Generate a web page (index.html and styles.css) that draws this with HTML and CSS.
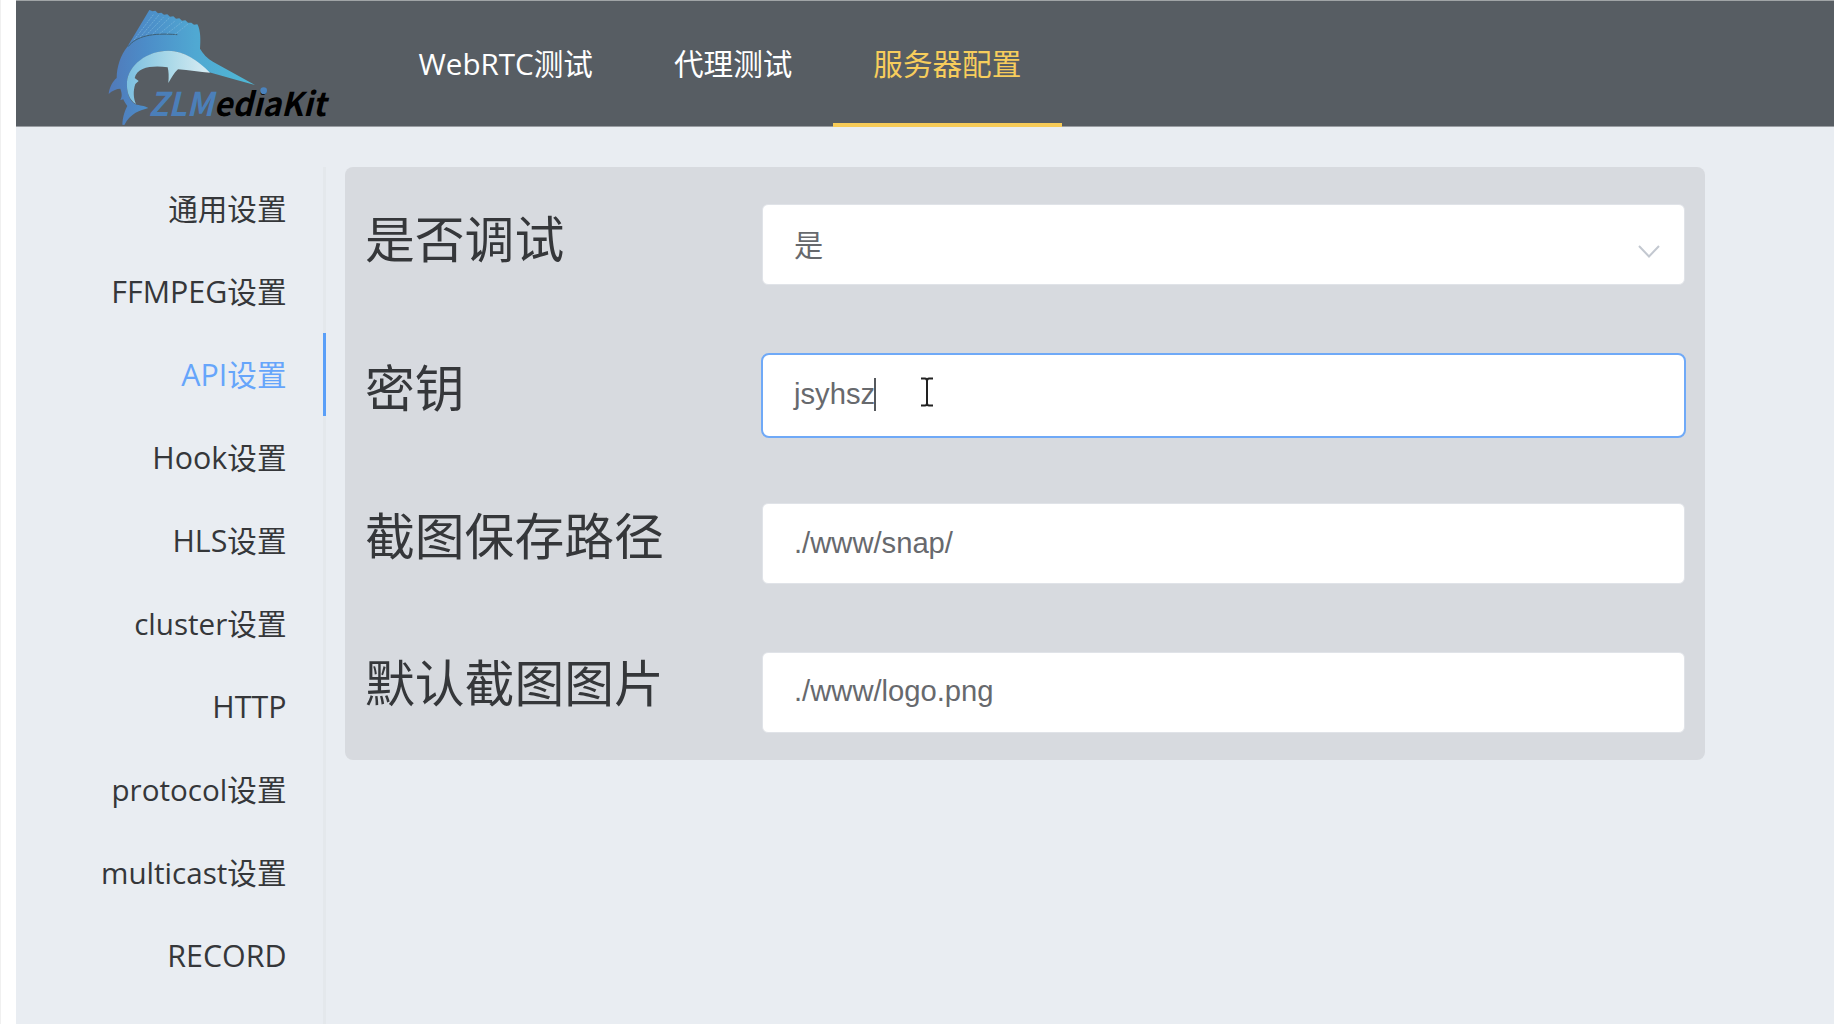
FILE: index.html
```html
<!DOCTYPE html>
<html lang="zh-CN">
<head>
<meta charset="utf-8">
<title>ZLMediaKit</title>
<link rel="stylesheet" href="styles.css">
</head>
<body>
<div class="app">
  <header class="header">
    <svg class="logo" viewBox="0 0 780 378" role="img" aria-label="ZLMediaKit">
      <defs>
        <linearGradient id="body" x1="55" y1="0" x2="490" y2="0" gradientUnits="userSpaceOnUse">
          <stop offset="0" stop-color="#5179b9"/><stop offset=".25" stop-color="#4c8cc8"/><stop offset=".6" stop-color="#50a8d2"/><stop offset="1" stop-color="#4fb9d6"/>
        </linearGradient>
        <linearGradient id="belly" x1="110" y1="0" x2="360" y2="0" gradientUnits="userSpaceOnUse">
          <stop offset="0" stop-color="#7cbfe0"/><stop offset=".5" stop-color="#a9d8e8"/><stop offset="1" stop-color="#d9ecf3"/>
        </linearGradient>
      </defs>
      <path fill="url(#body)" d="M178 30L188 34L196 32L204 40L214 38L222 44L232 43L240 50L250 49L258 56L268 55L276 62L286 61L294 68L304 68L312 74L322 73C332 90 332 120 330 146C338 160 352 176 370 186L495 255L440 240L355 216C320 180 280 152 235 152C170 154 116 196 111 245C109 275 118 302 135 312C150 318 162 316 175 324C150 332 122 338 103 375L97 374C98 350 106 328 112 318C106 310 102 304 100 298L91 300C97 290 96 280 91 266C80 266 66 272 56 282C58 262 68 244 80 234C80 200 92 165 112 140Z"/>
      <path fill="url(#belly)" d="M111 245C116 196 170 152 235 152C282 152 325 182 360 218C330 216 296 210 264 208C252 218 246 232 235 249C237 230 236 214 233 202C190 196 142 200 134 234L146 243L136 252C129 272 130 295 138 312C118 300 109 275 111 245Z"/>
      <path class="logo-fin" d="M114 140C140 108 185 98 262 104"/>
      <path class="logo-rays" d="M132 120L190 44M150 112L206 46M168 106L220 52M188 102L238 54M208 102L256 62M230 102L276 66M254 104L294 72"/>
      <text class="logo-text" x="176" y="347" textLength="532" lengthAdjust="spacingAndGlyphs"><tspan class="logo-blue">ZLM</tspan>ediaKit</text>
      <circle cx="521" cy="272" r="10" fill="#4b83bd"/>
    </svg>
    <nav class="nav">
      <a class="nav-item">WebRTC测试</a>
      <a class="nav-item">代理测试</a>
      <a class="nav-item nav-item-active">服务器配置</a>
    </nav>
  </header>
  <div class="content">
    <aside class="tabs">
      <a class="tab">通用设置</a>
      <a class="tab"><span class="caps">FFMPEG</span>设置</a>
      <a class="tab tab-active"><span class="caps">API</span>设置</a>
      <a class="tab"><span class="caps">Hook</span>设置</a>
      <a class="tab"><span class="caps">HLS</span>设置</a>
      <a class="tab">cluster设置</a>
      <a class="tab"><span class="caps">HTTP</span></a>
      <a class="tab">protocol设置</a>
      <a class="tab">multicast设置</a>
      <a class="tab"><span class="caps">RECORD</span></a>
    </aside>
    <main class="card">
      <div class="row"><label class="label">是否调试</label><div class="field field-select"><span>是</span>
        <svg class="chevron" viewBox="0 0 22 13"><path d="M1 1L11 11.500L21 1"/></svg></div></div>
      <div class="row"><label class="label">密钥</label><div class="field field-focus"><span>jsyhsz</span><i class="caret"></i>
        <svg class="pointer" viewBox="0 0 14 30"><path d="M1 1.500H5Q7 1.500 7 4Q7 1.500 9 1.500H13M7 4V26M1 28.500H5Q7 28.500 7 26Q7 28.500 9 28.500H13"/></svg></div></div>
      <div class="row"><label class="label">截图保存路径</label><div class="field"><span>./www/snap/</span></div></div>
      <div class="row"><label class="label">默认截图图片</label><div class="field field-last"><span>./www/logo.png</span></div></div>
    </main>
  </div>
</div>
</body>
</html>
```
FILE: styles.css
```css
* { box-sizing: border-box; }
body {
  margin: 0;
  height: 1024px;
  overflow: hidden;
  background: #fff;
  border-left: 1px solid #f0f0f0;
  padding-left: 15px;
  font-family: "Open Sans", "Noto Sans CJK SC", sans-serif;
  font-size: 29.6px;
  color: #35373a;
}
.app { height: 1024px; background: #e9edf2; }
.header {
  display: flex;
  height: 127px;
  padding-left: 74px;
  background: #575d63;
  border-top: 1px solid #a0a4a6;
  border-bottom: 1px solid #999da2;
}
.logo { width: 260px; height: 126px; margin-top: -1px; flex: none; }
.logo-fin { fill: none; stroke: #3d6076; stroke-width: 3; }
.logo-rays { fill: none; stroke: #7cb8dc; stroke-width: 2; stroke-dasharray: 6 3; }
.logo-text { font: italic 700 98px "Noto Sans CJK SC", sans-serif; fill: #000; }
.logo-blue { fill: #4b7fb9; }
.nav { display: flex; margin-left: 28px; }
.nav-item {
  height: 126px;
  line-height: 125px;
  padding: 0 40.5px;
  color: #fff;
  white-space: nowrap;
}
.nav-item-active { color: #f7cd5c; border-bottom: 4px solid #f7cb58; }
.content { display: flex; padding-top: 40px; }
.tabs {
  width: 310px;
  height: 857px;
  flex: none;
  border-right: 3px solid #e4e8ec;
}
.tab {
  display: block;
  height: 83px;
  line-height: 84px;
  padding-right: 36.5px;
  margin-right: -3px;
  border-right: 3px solid transparent;
  text-align: right;
}
.caps { font-size: 30.4px; }
.tab-active { color: #66a5fb; border-right-color: #5a9ff8; }
.card {
  width: 1360px;
  height: 593px;
  margin-left: 19px;
  padding: 37px 20px 0;
  border-radius: 8px;
  background: #d7dadf;
}
.row { display: flex; height: 149.3px; }
.label { width: 397px; height: 70px; line-height: 70px; font-size: 49.8px; }
.row:nth-child(3) .label { line-height: 66px; }
.row:nth-child(4) .label { line-height: 62px; }
.field {
  position: relative;
  display: flex;
  align-items: center;
  width: 923px;
  height: 81px;
  padding-left: 31px;
  background: #fff;
  border: 1px solid #e0e3e8;
  border-radius: 6px;
  font-family: "Liberation Sans", "Noto Sans CJK SC", sans-serif;
  font-size: 29.2px;
  color: #67696d;
}
.field-select { padding-bottom: 3px; }
.field-last { padding-bottom: 2px; }
.field-focus { height: 85px; margin: 0 -1px; width: 925px; padding-bottom: 2px; border: 2px solid #6fa9f7; border-radius: 8px; }
.caret { width: 2px; height: 33px; margin-left: -1px; background: #55585c; }
.chevron { position: absolute; right: 24px; top: 40px; width: 22px; height: 13px; fill: none; stroke: #c3c8d0; stroke-width: 2; }
.pointer { position: absolute; left: 157px; top: 22px; width: 14px; height: 30px; fill: none; stroke: #222; stroke-width: 2; }
```
